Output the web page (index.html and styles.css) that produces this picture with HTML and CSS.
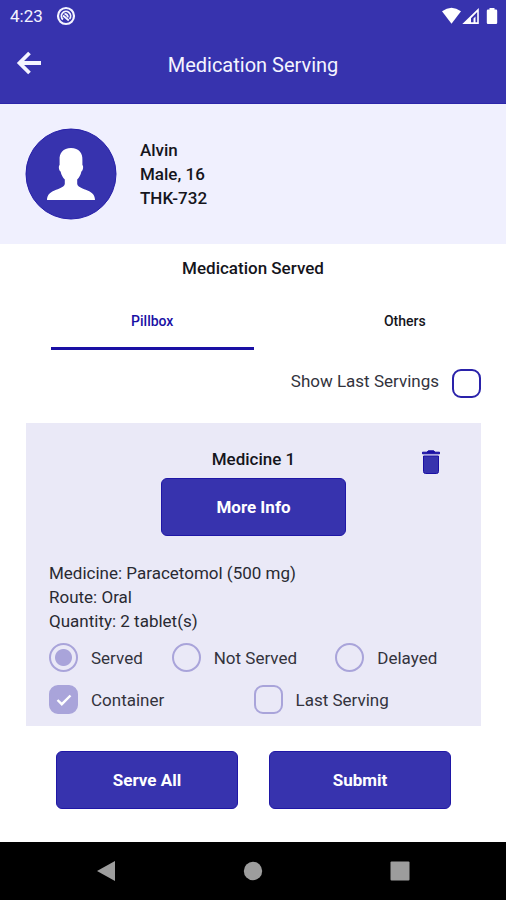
FILE: index.html
```html
<!DOCTYPE html>
<html lang="en">
<head>
<meta charset="utf-8">
<meta name="viewport" content="width=device-width, initial-scale=1">
<title>Medication Serving</title>
<link rel="stylesheet" href="styles.css">
</head>
<body>
<div class="app">
  <div class="status">
    <span class="status-left">
      <span>4:23</span>
      <svg width="20" height="20" viewBox="0 0 20 20" fill="none" stroke="currentColor" aria-hidden="true">
        <circle cx="10" cy="10" r="8" stroke-width="2.200"/>
        <path d="M7 13.500A4.600 4.600 0 1 1 13.500 13M7 9.500 12.800 14.500M8.500 7.800q3 0 3.500 3.500" stroke-width="1.800"/>
      </svg>
    </span>
    <svg class="status-right" width="56" height="18" viewBox="0 0 56 18" fill="currentColor" aria-hidden="true">
      <path d="M0 4.200Q9.500-2.800 19 4.200L9.500 16.800Z"/>
      <path fill-rule="evenodd" d="M36.800 1v16H20.300ZM35.200 5 29 11.300V15.300H35.200ZM33.500 9.500V15.300H31.500V11.500Z"/>
      <path d="M47.500 1h5v1.500H54q1.200 0 1.200 1.200v12q0 1.300-1.200 1.300h-8q-1.200 0-1.200-1.300v-12q0-1.200 1.200-1.200h1.500Z"/>
    </svg>
  </div>
  <header class="appbar">
    <button class="icon-button" type="button" aria-label="Back">
      <svg width="26" height="24" viewBox="0 0 26 24" fill="none" stroke="currentColor" stroke-width="3.800" aria-hidden="true">
        <path d="M25 12H4M13.500 2 3.500 12 13.500 22"/>
      </svg>
    </button>
    <h1>Medication Serving</h1>
  </header>
  <section class="profile">
    <svg class="avatar" width="92" height="92" viewBox="0 0 92 92" aria-hidden="true">
      <circle cx="46" cy="46" r="45" fill="#3733ae" stroke="#261fa9" stroke-width="1"/>
      <path fill="#fff" d="M46 20C38 20 34.200 25 34.600 32v5c-1.300.8-.8 5.500 1 6.500.7 3.500 2.200 6 4.200 8v4.500c-.8 3.500-6 4.500-10.300 6.500C24.500 64.500 22 67.500 22 72h48c0-4.500-2.500-7.500-7.500-9.500-4.300-2-9.500-3-10.300-6.500v-4.500c2-2 3.500-4.500 4.200-8 1.800-1 2.300-5.700 1-6.500v-5C57.800 25 54 20 46 20Z"/>
    </svg>
    <p>Alvin<br>Male, 16<br>THK-732</p>
  </section>
  <main>
    <h2 class="title">Medication Served</h2>
    <div class="tabs" role="tablist">
      <button class="tab selected" type="button" role="tab" aria-selected="true">Pillbox</button>
      <button class="tab" type="button" role="tab" aria-selected="false">Others</button>
    </div>
    <label class="option show-last">Show Last Servings <input type="checkbox"></label>
    <section class="card">
      <div class="card-head">
        <h2>Medicine 1</h2>
        <button class="icon-button trash" type="button" aria-label="Delete">
          <svg width="18" height="24" viewBox="0 0 18 24" fill="#3733ae" stroke="#1a10a4" stroke-width="1" aria-hidden="true">
            <path d="M.5 2.200H5L6.200.8h5.600L13 2.200h4.500v1.600H.5Z" fill="#1a10a4"/>
            <path d="M1.500 6h15v15.500q0 2-2 2h-11q-2 0-2-2Z"/>
          </svg>
        </button>
      </div>
      <button class="button more" type="button">More Info</button>
      <p class="details">Medicine: Paracetomol (500 mg)<br>Route: Oral<br>Quantity: 2 tablet(s)</p>
      <div class="row radios">
        <label class="option"><input type="radio" name="state" checked> Served</label>
        <label class="option"><input type="radio" name="state"> Not Served</label>
        <label class="option"><input type="radio" name="state"> Delayed</label>
      </div>
      <div class="row checks">
        <label class="option">
          <span class="check">
            <input type="checkbox" checked>
            <svg width="16" height="12" viewBox="0 0 16 12" fill="none" stroke="#fff" stroke-width="2.400" aria-hidden="true"><path d="M1.500 6 5.800 10.200 14.500 1.500"/></svg>
          </span>
          Container
        </label>
        <label class="option"><input type="checkbox"> Last Serving</label>
      </div>
    </section>
    <div class="actions">
      <button class="button" type="button">Serve All</button>
      <button class="button" type="button">Submit</button>
    </div>
  </main>
  <nav class="navbar">
    <button class="icon-button" type="button" aria-label="System back"><svg width="20" height="22" viewBox="0 0 20 22" fill="currentColor"><path d="M1 11 19 1v20Z"/></svg></button>
    <button class="icon-button" type="button" aria-label="Home"><svg width="20" height="20" viewBox="0 0 20 20" fill="currentColor"><circle cx="10" cy="10" r="9.200"/></svg></button>
    <button class="icon-button" type="button" aria-label="Recent apps"><svg width="20" height="20" viewBox="0 0 20 20" fill="currentColor"><rect x=".5" y=".5" width="19" height="19" rx="1"/></svg></button>
  </nav>
</div>
</body>
</html>
```
FILE: styles.css
```css
* { box-sizing: border-box; }
body {
  margin: 0;
  background: #fff;
  color: #15151c;
  font: 17px/24px Roboto, "Liberation Sans", sans-serif;
}
h1, h2, p { margin: 0; }
h2 { font-size: 17px; font-weight: 500; text-align: center; }
button, input { font: inherit; color: inherit; margin: 0; }
svg { display: block; }

.app { display: flex; flex-direction: column; min-height: 100vh; }
.status {
  display: flex;
  justify-content: space-between;
  align-items: center;
  height: 32px;
  padding: 0 8px 0 10px;
  background: #3733ae;
  color: #f4f4ff;
}
.status-left { display: flex; align-items: center; gap: 13px; }
.status-right { color: #fff; }
.appbar {
  display: grid;
  grid-template-columns: 26px 1fr 26px;
  align-items: start;
  height: 72px;
  padding: 19px 16px 0;
  background: #3733ae;
  border-bottom: 1px solid #2c26aa;
  color: #f4f4ff;
}
.appbar h1 { padding-top: 2px; font-size: 20px; font-weight: 400; text-align: center; }
.icon-button {
  display: flex;
  padding: 0;
  border: 0;
  background: none;
  cursor: pointer;
}
.profile {
  display: flex;
  align-items: center;
  gap: 23px;
  padding: 24px 25px;
  background: #f0f0fe;
  font-weight: 500;
}
main { flex: 1; }
.title { padding-top: 12px; }
.tabs {
  display: grid;
  grid-template-columns: 1fr 1fr;
  gap: 50px;
  padding: 10px 0 0 51px;
}
.tab {
  height: 60px;
  border: 0;
  border-bottom: 3px solid transparent;
  padding: 4px 0 0;
  background: none;
  font-size: 14px;
  font-weight: 500;
}
.tab.selected { border-color: #1a10a4; color: #1a10a4; }
.option { display: flex; align-items: center; gap: 13px; color: #33333d; }
.show-last { align-items: flex-start; justify-content: flex-end; margin: 19px 25px 0; }
input {
  appearance: none;
  width: 29px;
  height: 29px;
  border: 2px solid #a9a4da;
  border-radius: 9px;
}
.show-last input { border-color: #2a22aa; }
input[type="radio"] { border-radius: 50%; }
input[type="radio"]:checked {
  background: radial-gradient(circle, #a9a4da 8px, transparent 9px);
}
.check { display: grid; }
.check > * { grid-area: 1 / 1; }
.check svg { place-self: center; pointer-events: none; }
.check input:checked { background: #a9a4da; }
.card {
  margin: 25px 25px 0 26px;
  padding: 24px 23px 12px;
  background: #eae9f7;
}
.card-head {
  display: grid;
  grid-template-columns: 1fr auto 1fr;
}
.card-head h2 { grid-column: 2; }
.trash { justify-self: end; padding: 3px 18px 0 0; }
.button {
  height: 58px;
  border: 1px solid #1f17a6;
  border-radius: 6px;
  background: #3733ae;
  color: #fff;
  font-weight: 700;
}
.more { display: block; width: 45%; margin: 4px auto 25px; }
.details { color: #292932; }
.row { display: grid; }
.radios { grid-template-columns: 3fr 4fr 3fr; margin-top: 10px; }
.checks { grid-template-columns: 1fr 1fr; margin-top: 13px; }
.actions {
  display: grid;
  grid-template-columns: 1fr 1fr;
  gap: 31px;
  padding: 25px 55px 31px 56px;
}
.navbar {
  display: grid;
  grid-template-columns: repeat(3, 1fr);
  justify-items: center;
  align-items: center;
  height: 58px;
  padding: 0 33px;
  background: #000;
  color: #9d9d9d;
}
```
